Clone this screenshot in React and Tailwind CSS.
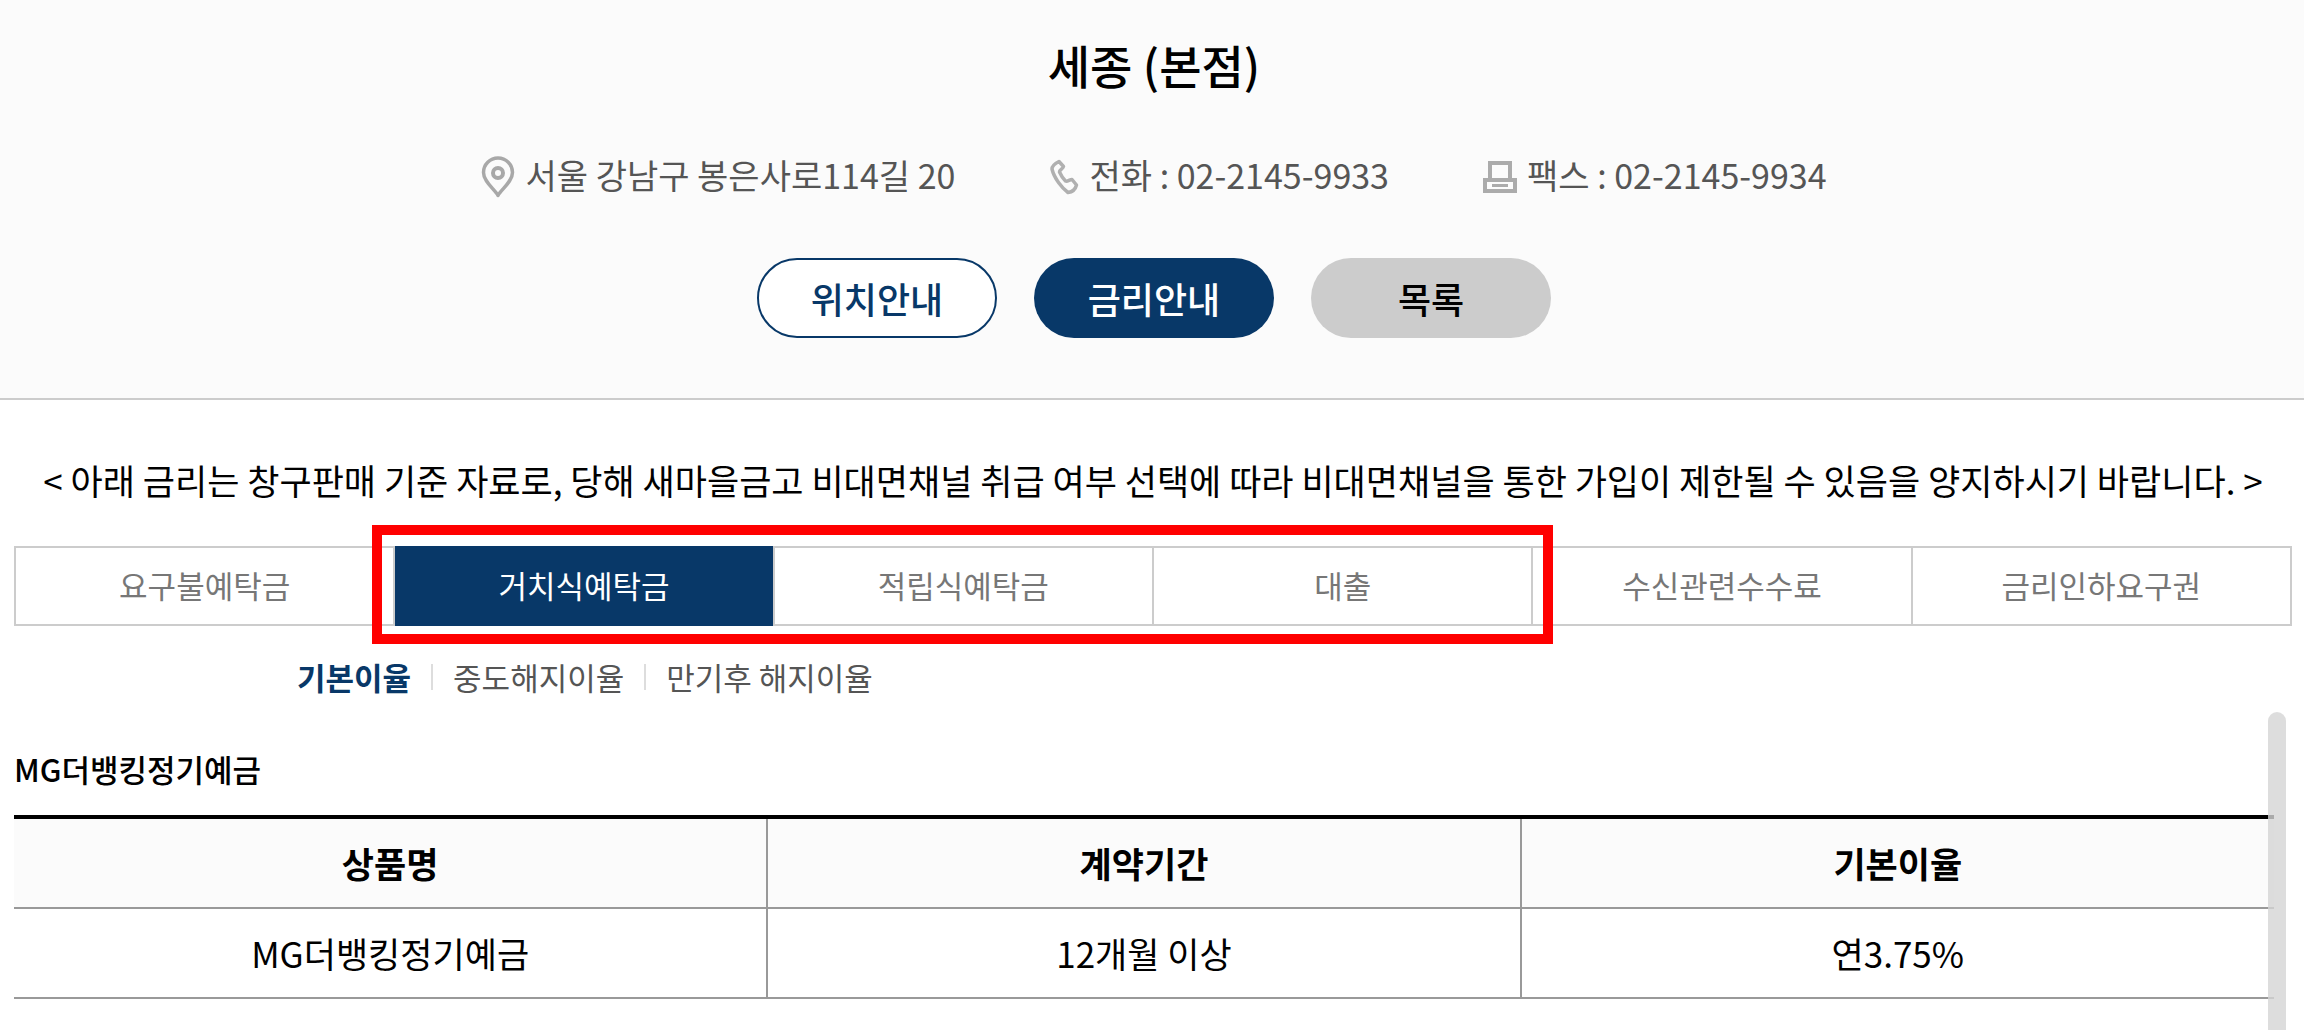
import { useState } from 'react';

const tabs = ['요구불예탁금', '거치식예탁금', '적립식예탁금', '대출', '수신관련수수료', '금리인하요구권'];
const subTabs = ['기본이율', '중도해지이율', '만기후 해지이율'];
const rates = [{ name: 'MG더뱅킹정기예금', period: '12개월 이상', rate: '연3.75%' }];

function PinIcon() {
  return (
    <svg className="mt-1 w-[34px] h-[42px]" viewBox="0 0 34 42" fill="none" stroke="#a8a8a8" strokeWidth="3.500" strokeLinejoin="round" aria-hidden="true">
      <path d="M17 39.500C14 33.500 2.500 26 2.500 16.500a14.500 14.500 0 0 1 29 0C31.500 26 20 33.500 17 39.500z" />
      <circle cx="17" cy="17" r="5" strokeWidth="4" />
    </svg>
  );
}

function PhoneIcon() {
  return (
    <svg className="mt-1 w-[30px] h-[36px]" viewBox="0 0 30 36" fill="none" stroke="#b0b0b0" strokeWidth="3.500" strokeLinejoin="round" aria-hidden="true">
      <path d="M3 10c0-3 3-5.500 7-7.500l4.500 5c-.5 2.500-4 3-4 5.500 1.500 3.500 3.500 6.500 6 9 2 1 4-1.500 6.500-1.500l4.500 5.500c-1 4-4.500 7-8.500 7.500C13 29 5 19 3 10z" />
    </svg>
  );
}

function FaxIcon() {
  return (
    <svg className="mt-1 w-[34px] h-[34px]" viewBox="0 0 34 34" fill="none" stroke="#ababab" strokeWidth="4" aria-hidden="true">
      <path d="M7 20V3h20v17M2 20h30v11H2z" />
      <path d="M9 25.500h16" strokeWidth="3" />
    </svg>
  );
}

export default function App() {
  const [tab, setTab] = useState(1);
  const [subTab, setSubTab] = useState(0);

  return (
    <div className="min-h-screen overflow-hidden bg-white text-black font-['Noto_Sans_CJK_KR',sans-serif]">
      {/* Branch info */}
      <header className="flex flex-col items-center bg-[#fbfbfb] border-b-2 border-[#ccc] pl-1 pt-8 pb-[60px]">
        <h1 className="text-[46px] leading-[64px] font-medium">세종 (본점)</h1>
        <ul className="flex gap-[94px] mt-12 text-[34px] leading-[62px] text-[#555]">
          <li className="flex items-center gap-2.5"><PinIcon />서울 강남구 봉은사로114길 20</li>
          <li className="flex items-center gap-2.5"><PhoneIcon />전화 : 02-2145-9933</li>
          <li className="flex items-center gap-2.5"><FaxIcon />팩스 : 02-2145-9934</li>
        </ul>
        <div className="flex gap-[37px] mt-[52px] text-[36px] font-medium">
          <button className="w-60 h-20 rounded-full border-2 border-[#083868] bg-white text-[#083868]">위치안내</button>
          <button className="w-60 h-20 rounded-full bg-[#083868] text-white">금리안내</button>
          <button className="w-60 h-20 rounded-full bg-[#ccc]">목록</button>
        </div>
      </header>

      <main className="pl-3.5 pr-3">
        <p className="pt-[54px] text-center text-[35px] leading-[52px]">
          &lt; 아래 금리는 창구판매 기준 자료로, 당해 새마을금고 비대면채널 취급 여부 선택에 따라 비대면채널을 통한 가입이 제한될 수 있음을 양지하시기 바랍니다. &gt;
        </p>

        {/* Deposit type tabs */}
        <nav className="relative grid grid-cols-6 mt-10 border-r-2 border-[#ccc]">
          {tabs.map((name, i) => (
            <button
              key={name}
              onClick={() => setTab(i)}
              className={`h-20 pb-0.5 text-[31px] border-l-2 border-[#ccc] ${
                i === tab ? 'bg-[#083868] text-white' : 'border-y-2 text-[#777]'
              }`}
            >
              {name}
            </button>
          ))}
          <div className="absolute -top-[21px] -bottom-[18px] left-[15.75%] right-[32.4%] border-[10px] border-[#f00] pointer-events-none" />
        </nav>

        <div className="flex items-center mt-[23px] pl-[283px] text-[31px] leading-[56px] text-[#555]">
          {subTabs.map((name, i) => (
            <div key={name} className="flex items-center">
              {i > 0 && <span className="w-0.5 h-[26px] mx-5 bg-[#ddd]" />}
              <button
                onClick={() => setSubTab(i)}
                className={i === subTab ? 'font-bold text-[#083868]' : ''}
              >
                {name}
              </button>
            </div>
          ))}
        </div>

        {/* Rate table */}
        <section className="relative mt-[7px] min-h-[318px] pr-[18px]">
          <h2 className="pt-[33px] pb-[22px] text-[31px] leading-[48px] font-medium">MG더뱅킹정기예금</h2>
          <table className="w-full table-fixed border-t-4 border-black text-center text-[35px]">
            <thead className="bg-[#fbfbfb]">
              <tr className="h-[91px] border-b-2 border-[#999]">
                <th className="font-bold">상품명</th>
                <th className="font-bold border-x-2 border-[#999]">계약기간</th>
                <th className="font-bold">기본이율</th>
              </tr>
            </thead>
            <tbody>
              {rates.map((row) => (
                <tr key={row.name} className="h-[90px] border-b-2 border-[#999]">
                  <td>{row.name}</td>
                  <td className="border-x-2 border-[#999]">{row.period}</td>
                  <td>{row.rate}</td>
                </tr>
              ))}
            </tbody>
          </table>
          <div className="absolute top-0 -bottom-4 right-1.5 w-[18px] rounded-full bg-[#d4d4d4]/80" />
        </section>
      </main>
    </div>
  );
}
